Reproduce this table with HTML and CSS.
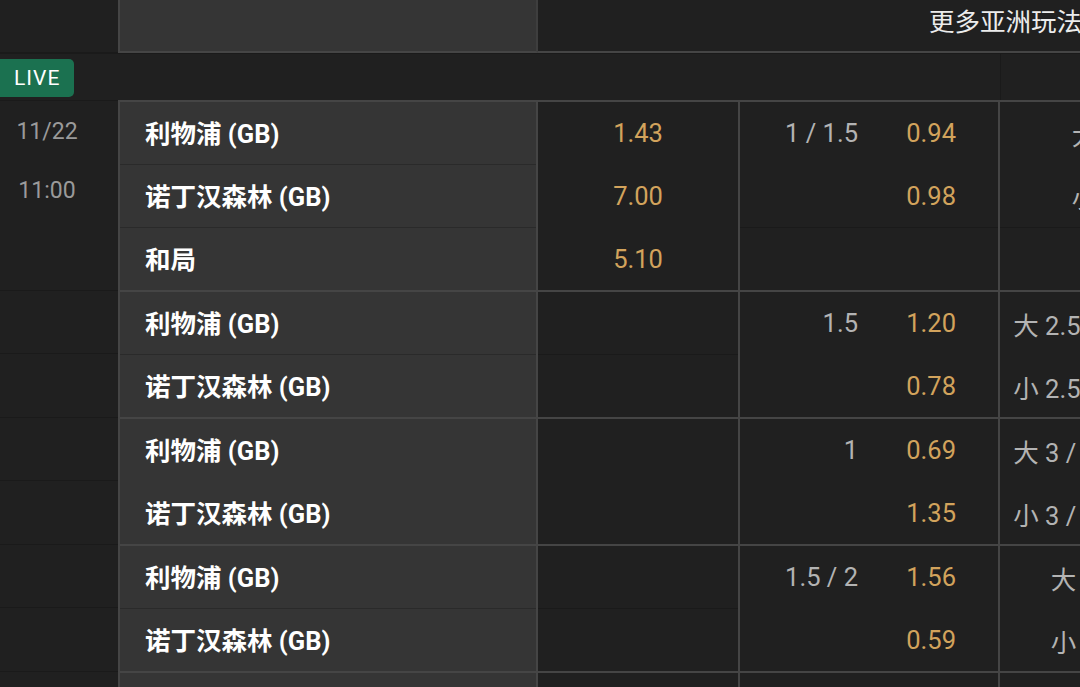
FILE: index.html
```html
<!DOCTYPE html>
<html lang="zh">
<head>
<meta charset="utf-8">
<title>赛事</title>
<link rel="stylesheet" href="styles.css">
</head>
<body>
<div class="page">
  <div class="header">
    <div class="h-time"></div>
    <div class="h-team"></div>
    <div class="h-more">更多亚洲玩法</div>
  </div>
  <div class="live-row">
    <div class="live-left"><span class="live">LIVE</span></div>
    <div class="live-mid"></div>
    <div class="live-ou"></div>
  </div>

  <div class="match">
    <div class="time first">
      <div class="trow">11/22</div>
      <div class="trow">11:00</div>
      <div class="trow"></div>
    </div>
    <div class="teams">
      <div class="team">利物浦 (GB)</div>
      <div class="team sep">诺丁汉森林 (GB)</div>
      <div class="team sep">和局</div>
    </div>
    <div class="col odds">
      <div class="cell">1.43</div>
      <div class="cell">7.00</div>
      <div class="cell">5.10</div>
    </div>
    <div class="col hcap">
      <div class="cell"><span class="line">1 / 1.5</span><span class="price">0.94</span></div>
      <div class="cell"><span class="line"></span><span class="price">0.98</span></div>
      <div class="cell dsep"></div>
    </div>
    <div class="col ou">
      <div class="cell"><span class="ouline">大 3</span></div>
      <div class="cell"><span class="ouline">小 3</span></div>
      <div class="cell dsep"></div>
    </div>
  </div>

  <div class="match">
    <div class="time">
      <div class="trow"></div>
      <div class="trow dsep"></div>
    </div>
    <div class="teams">
      <div class="team">利物浦 (GB)</div>
      <div class="team sep">诺丁汉森林 (GB)</div>
    </div>
    <div class="col odds">
      <div class="cell"></div>
      <div class="cell dsep"></div>
    </div>
    <div class="col hcap">
      <div class="cell"><span class="line">1.5</span><span class="price">1.20</span></div>
      <div class="cell"><span class="line"></span><span class="price">0.78</span></div>
    </div>
    <div class="col ou">
      <div class="cell"><span class="ouline">大 2.5 / 3</span></div>
      <div class="cell"><span class="ouline">小 2.5 / 3</span></div>
    </div>
  </div>

  <div class="match">
    <div class="time">
      <div class="trow"></div>
      <div class="trow dsep"></div>
    </div>
    <div class="teams">
      <div class="team">利物浦 (GB)</div>
      <div class="team">诺丁汉森林 (GB)</div>
    </div>
    <div class="col odds">
      <div class="cell"></div>
      <div class="cell"></div>
    </div>
    <div class="col hcap">
      <div class="cell"><span class="line">1</span><span class="price">0.69</span></div>
      <div class="cell"><span class="line"></span><span class="price">1.35</span></div>
    </div>
    <div class="col ou">
      <div class="cell"><span class="ouline">大 3 / 3.5</span></div>
      <div class="cell"><span class="ouline">小 3 / 3.5</span></div>
    </div>
  </div>

  <div class="match">
    <div class="time">
      <div class="trow"></div>
      <div class="trow dsep"></div>
    </div>
    <div class="teams">
      <div class="team">利物浦 (GB)</div>
      <div class="team sep">诺丁汉森林 (GB)</div>
    </div>
    <div class="col odds">
      <div class="cell"></div>
      <div class="cell dsep"></div>
    </div>
    <div class="col hcap">
      <div class="cell"><span class="line">1.5 / 2</span><span class="price">1.56</span></div>
      <div class="cell"><span class="line"></span><span class="price">0.59</span></div>
    </div>
    <div class="col ou">
      <div class="cell"><span class="ouline">大 3.5</span></div>
      <div class="cell"><span class="ouline">小 3.5</span></div>
    </div>
  </div>

  <div class="match">
    <div class="time">
      <div class="trow"></div>
    </div>
    <div class="teams">
      <div class="team"></div>
    </div>
    <div class="col odds"><div class="cell"></div></div>
    <div class="col hcap"><div class="cell"></div></div>
    <div class="col ou"><div class="cell"></div></div>
  </div>
</div>
</body>
</html>
```

FILE: styles.css
```css
html, body {
  margin: 0;
  padding: 0;
  background: #202020;
  overflow: hidden;
}
body {
  width: 1080px;
  height: 687px;
  font-family: Roboto, "Noto Sans CJK SC", sans-serif;
  color: #b3b3b3;
}
.page {
  width: 1400px;
  display: flex;
  flex-direction: column;
}

/* header */
.header {
  display: flex;
  height: 53px;
}
.h-time {
  width: 118px;
  border-bottom: 1px solid #1a1a1a;
}
.h-team {
  width: 416px;
  background: #353535;
  border-left: 2px solid #454545;
  border-right: 2px solid #3e3e3e;
  border-bottom: 2px solid #454545;
}
.h-more {
  flex: 1;
  border-bottom: 2px solid #454545;
  font-size: 25.5px;
  color: #ececec;
  padding-left: 391px;
  line-height: 44px;
  white-space: nowrap;
}

/* live row */
.live-row {
  display: flex;
  height: 47px;
  border-top: 1px solid #1a1a1a;
  box-sizing: border-box;
}
.live-left {
  width: 118px;
  display: flex;
  align-items: flex-start;
}
.live {
  display: inline-block;
  background: #1b7150;
  color: #ffffff;
  font-size: 21px;
  letter-spacing: 1px;
  line-height: 38px;
  height: 38px;
  padding: 0 14px 0 14px;
  border-radius: 0 5px 5px 0;
  margin-top: 5px;
}
.live-mid {
  width: 882px;
}
.live-ou {
  flex: 1;
  border-left: 1px solid #1a1a1a;
}

/* matches */
.match {
  display: flex;
}
.time {
  width: 118px;
  border-top: 1px solid #1a1a1a;
  padding-top: 1px;
  font-size: 23px;
  color: #9a9a9a;
}
.trow {
  height: 62px;
  border-top: 1px solid transparent;
  padding-right: 24px;
  display: flex;
  align-items: center;
  justify-content: center;
}
.trow:first-child {
  height: 61px;
  border-top: none;
}
.trow.dsep {
  border-top-color: #1a1a1a;
}
.time.first .trow:first-child {
  align-items: flex-start;
  padding-top: 16px;
  box-sizing: border-box;
  height: 61px;
}
.time.first .trow:nth-child(2) {
  align-items: flex-start;
  padding-top: 13px;
  box-sizing: border-box;
  height: 63px;
}

.teams {
  width: 416px;
  background: #353535;
  border-top: 2px solid #454545;
  border-left: 2px solid #454545;
  border-right: 2px solid #454545;
}
.team {
  height: 62px;
  box-sizing: border-box;
  border-top: 1px solid transparent;
  display: flex;
  align-items: center;
  padding-left: 25px;
  padding-bottom: 4px;
  font-size: 25.5px;
  font-weight: 700;
  color: #ffffff;
}
.team + .team {
  height: 63px;
}
.team:first-child {
  border-top: none;
}
.team.sep {
  border-top-color: #2a2a2a;
}

.col {
  border-top: 2px solid #454545;
  border-right: 2px solid #454545;
}
.odds {
  width: 200px;
}
.hcap {
  width: 258px;
}
.ou {
  flex: 1;
  border-right: none;
}
.cell {
  height: 62px;
  border-top: 1px solid transparent;
  display: flex;
  align-items: center;
  font-size: 25.5px;
}
.cell:first-child {
  border-top: none;
}
.cell.dsep {
  border-top-color: #1a1a1a;
}
.odds .cell {
  justify-content: center;
  color: #d2a35c;
}
.hcap .cell {
  justify-content: flex-end;
  padding-right: 42px;
}
.line {
  color: #b3b3b3;
}
.price {
  width: 98px;
  text-align: right;
  color: #d2a35c;
}
.ouline {
  width: 118px;
  text-align: right;
  white-space: nowrap;
  color: #b3b3b3;
}
```
